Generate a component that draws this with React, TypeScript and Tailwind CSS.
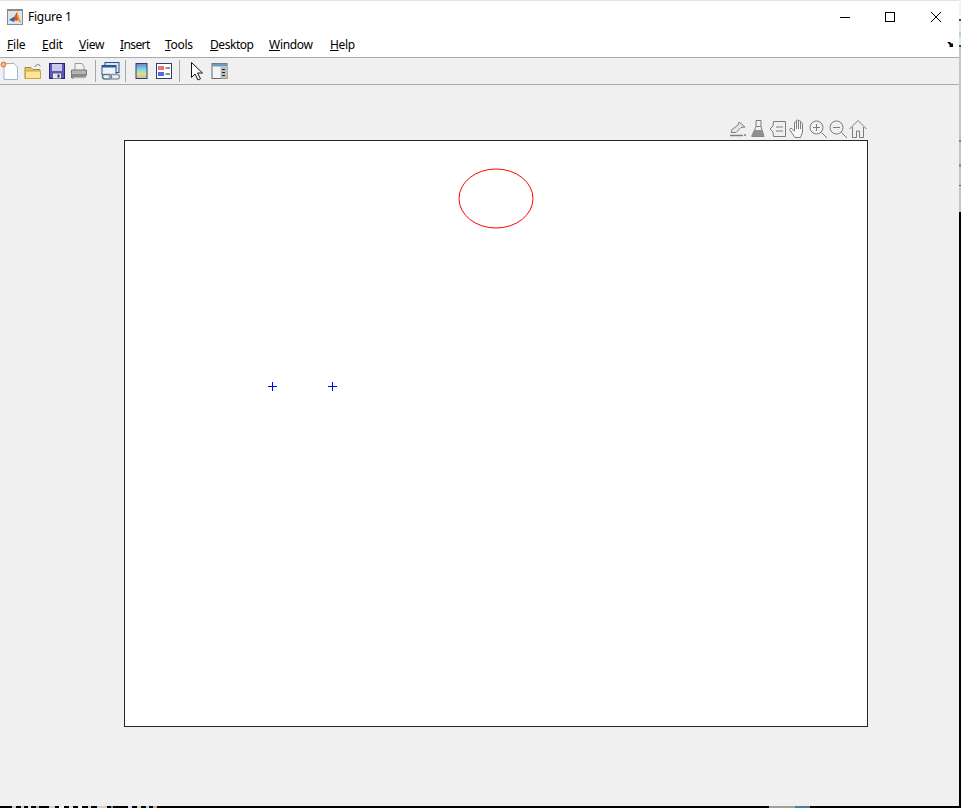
const menus: [string, string, string, string][] = [
  ["F", "ile", "w-[35px]", "tracking-[-0.2px]"],
  ["E", "dit", "w-[37px]", "tracking-[-0.2px]"],
  ["V", "iew", "w-[41px]", "tracking-[-0.3px]"],
  ["I", "nsert", "w-[45px]", "tracking-[-0.6px]"],
  ["T", "ools", "w-[45px]", "tracking-[-0.3px]"],
  ["D", "esktop", "w-[59px]", "tracking-[-0.45px]"],
  ["W", "indow", "w-[61px]", "tracking-[-0.3px]"],
  ["H", "elp", "w-[40px]", "tracking-[-0.3px]"],
];

const specks: [number, string][] = [
  [12, "bg-black"], [4, "bg-[#bcd4e8]"], [5, "bg-black"], [3, "bg-[#e8c9a0]"], [4, "bg-black"], [3, "bg-[#cfe0ef]"], [5, "bg-black"], [3, "bg-[#e0a070]"],
  [10, "bg-black"], [3, "bg-[#bcd4e8]"], [3, "bg-[#e8c9a0]"], [4, "bg-black"], [5, "bg-[#f0f0f0]"], [5, "bg-black"], [4, "bg-[#cfe0ef]"], [5, "bg-black"], [4, "bg-[#f0f0f0]"],
  [6, "bg-black"], [3, "bg-[#e8c9a0]"], [6, "bg-black"], [4, "bg-[#bcd4e8]"], [6, "bg-[#e8c9a0]"], [4, "bg-black"], [2, "bg-[#4a9ad0]"],
  [15, "bg-black"], [4, "bg-[#cfe0ef]"], [5, "bg-black"], [4, "bg-[#e8c9a0]"], [5, "bg-black"], [3, "bg-[#bcd4e8]"], [4, "bg-black"], [4, "bg-[#e0a070]"],
];

function Sep({ className = "mx-[4px]" }: { className?: string }) {
  return <div className={`w-px h-[22px] bg-[#a8a8a8] shrink-0 ${className}`} />;
}

function Tool({ children, w = "w-[23px]" }: { children: React.ReactNode; w?: string }) {
  return <svg viewBox="0 0 20 20" className={`${w} h-[20px] shrink-0`}>{children}</svg>;
}

function ToolbarIcons() {
  return (
    <div className="h-[26px] flex items-center bg-[#f0f0f0] border-b border-[#a9a9a9] box-content shrink-0">
      <Tool w="w-[20px]">
        <path d="M4 2.5h10l3.5 3.5v12.5H4z" fill="#fff" stroke="#9db4d4" />
        <circle cx="3.5" cy="3.5" r="2.4" fill="#f6b98a" stroke="#e0662c" />
      </Tool>
      <div className="w-[2px] shrink-0" />
      <Tool w="w-[22px]">
        <path d="M2 6.5h6l2 2h7v9H2z" fill="#e6c466" stroke="#a88a2c" />
        <path d="M2.5 10h15v7.5h-15z" fill="#fbe59a" stroke="#c8a53c" />
        <path d="M11.5 6l3-3 3 2" fill="none" stroke="#5f7fa6" />
      </Tool>
      <div className="w-[2px] shrink-0" />
      <Tool w="w-[22px]">
        <rect x="2.5" y="2.5" width="15" height="15" fill="#5a5ab8" stroke="#26266e" />
        <rect x="5" y="3" width="10" height="7" fill="#c9c9ea" />
        <rect x="6" y="12.5" width="8" height="5" fill="#e8e8e8" />
        <rect x="10.5" y="13.5" width="2" height="3" fill="#333" />
      </Tool>
      <Tool w="w-[22px]">
        <path d="M6 2.5h7l2 3v5H6z" fill="#f2f2f2" stroke="#9a9a9a" />
        <path d="M2.5 9h15v5l-2 3h-13z" fill="#b4b4b4" stroke="#777" />
        <path d="M3 13h14v3H3z" fill="#8a8a8a" />
        <path d="M5 16.5h11v1.5H5z" fill="#dedede" />
      </Tool>
      <Sep className="ml-[5px] mr-[4px]" />
      <Tool w="w-[21px]">
        <rect x="4.5" y="1.5" width="14" height="10" fill="#dbe6f5" stroke="#2a4f85" />
        <rect x="1.5" y="4.5" width="14" height="9" fill="#eef3fa" stroke="#2a4f85" />
        <rect x="1.5" y="4.5" width="14" height="2" fill="#2a5a9b" />
        <rect x="2" y="13.5" width="9" height="4.5" rx="2.2" fill="none" stroke="#64778c" strokeWidth="1.5" />
        <rect x="9" y="13.5" width="10" height="4.5" rx="2.2" fill="none" stroke="#8b9aaa" strokeWidth="1.5" />
      </Tool>
      <Sep />
      <Tool>
        <defs>
          <linearGradient id="cbar" x1="0" y1="0" x2="0" y2="1">
            <stop offset="0" stopColor="#6a80c8" />
            <stop offset="0.35" stopColor="#7fd0e0" />
            <stop offset="0.65" stopColor="#c8e8a0" />
            <stop offset="1" stopColor="#f4b090" />
          </linearGradient>
        </defs>
        <rect x="4.5" y="2.5" width="11" height="15" fill="url(#cbar)" stroke="#2a4170" />
      </Tool>
      <Tool w="w-[22px]">
        <rect x="2.5" y="2.5" width="15" height="15" fill="#fff" stroke="#2a4170" />
        <rect x="4" y="5" width="6" height="4" fill="#ee7070" />
        <rect x="4" y="11" width="6" height="4" fill="#5a66e0" />
        <path d="M11.5 7h4.5M11.5 13h4.5" stroke="#222" strokeWidth="1.2" />
      </Tool>
      <Sep className="ml-[4px] mr-[5px]" />
      <Tool>
        <path d="M5 1.5v15l3.5-3.5 3 6 2.5-1.2-3-5.8h5z" fill="#fff" stroke="#111" />
      </Tool>
      <Tool>
        <rect x="2.5" y="2.5" width="15" height="15" fill="#f4f4f4" stroke="#666" />
        <rect x="2.5" y="2.5" width="15" height="3" fill="#6f9cbc" />
        <rect x="11" y="5.5" width="6.5" height="12" fill="#bdbdbd" />
        <path d="M12.5 8.5h3M12.5 11.5h3M12.5 14.5h3" stroke="#222" />
      </Tool>
    </div>
  );
}

function AxesToolbar() {
  const s = "#7d7d7d";
  return (
    <div className="h-[20px] flex justify-end pr-[91px] shrink-0">
      <svg viewBox="0 0 20 20" className="w-[20px] h-[20px]">
        <path d="M3 13.5l1-3 6-4.5 1-3 6 5-4 .5-5 5z" fill="#e6e6e6" stroke={s} />
        <path d="M2 16.5h13M17 15v2" fill="none" stroke={s} strokeWidth="1.5" />
      </svg>
      <svg viewBox="0 0 20 20" className="w-[20px] h-[20px]">
        <path d="M8 1.5h5v6l3 10H4l4-10z M8 7.5h5" fill="#f0f0f0" stroke={s} />
        <path d="M6 11h8.5l1.5 6.5H3z" fill="#8f8f8f" />
      </svg>
      <svg viewBox="0 0 20 20" className="w-[20px] h-[20px]">
        <path d="M5.5 2.5h12v15h-12L5 13 2 10l3-3z M8 8h7M8 12h7" fill="none" stroke={s} />
      </svg>
      <svg viewBox="0 0 20 20" className="w-[20px] h-[20px]">
        <path d="M7 18.5l-5.5-8 1.5-1.5 3.5 3V4a1 1 0 012 0v6-8a1 1 0 012 0v8-7.5a1 1 0 012 0V10 4.5a1 1 0 012 0V13l-2 5.5z" fill="#f8f8f8" stroke={s} strokeLinejoin="round" />
      </svg>
      <svg viewBox="0 0 20 20" className="w-[20px] h-[20px]">
        <circle cx="8.5" cy="8.5" r="6.5" fill="none" stroke={s} />
        <path d="M5 8.5h7M8.5 5v7M13.5 13.5l5.5 5.5" fill="none" stroke={s} />
      </svg>
      <svg viewBox="0 0 20 20" className="w-[20px] h-[20px]">
        <circle cx="8.5" cy="8.5" r="6.5" fill="none" stroke={s} />
        <path d="M5 8.5h7M13.5 13.5l5.5 5.5" fill="none" stroke={s} />
      </svg>
      <svg viewBox="0 0 20 20" className="w-[20px] h-[20px]">
        <path d="M1.5 10l8.5-8.5 8.5 8.5M4.5 8v10.5h4v-6.5h3v6.5h4V8" fill="none" stroke={s} />
      </svg>
    </div>
  );
}

export default function App() {
  return (
    <div className="w-[961px] h-[808px] flex flex-col bg-black overflow-hidden font-['Noto_Sans',sans-serif] text-black">
      <div className="h-[806px] flex shrink-0">
        <div className="w-[959px] h-[806px] flex flex-col bg-[#f0f0f0] shrink-0">
          <div className="bg-white border-t-2 border-[#e4e4e4] box-content shrink-0 -mt-[1px]">
            <div className="h-[32px] flex items-center">
              <div className="ml-[7px] w-[16px] h-[16px] border border-[#8a8a8a] border-t-2 bg-[#dfe4ea] flex items-center justify-center">
                <svg viewBox="0 0 14 14" className="w-[14px] h-[14px]">
                  <path d="M1 9l3-2 2-1 3-5 4 11-3-3-2 1-2-2z" fill="#d9541e" />
                  <path d="M1 9l3-2 2-1 1 3-1 2z" fill="#2f6fb0" />
                  <path d="M9 1l4 11-3-3-1-4z" fill="#f4a82a" />
                </svg>
              </div>
              <span className="ml-[5px] text-[12px] leading-none tracking-[-0.25px] whitespace-nowrap">Figure 1</span>
              <div className="ml-auto flex items-center">
                <svg viewBox="0 0 45 32" className="w-[45px] h-[32px]"><path d="M11 16.5h10" stroke="#000" /></svg>
                <svg viewBox="0 0 46 32" className="w-[46px] h-[32px]"><rect x="11.5" y="11.5" width="9" height="9" fill="none" stroke="#000" /></svg>
                <svg viewBox="0 0 39 32" className="w-[39px] h-[32px]"><path d="M11 11l10 10M21 11L11 21" stroke="#000" /></svg>
              </div>
            </div>
            <div className="h-[24px] flex items-center pl-[7px] relative border-b border-[#a9a9a9] box-content">
              {menus.map(([k, rest, w, t]) => (
                <div key={k} className={`${w} ${t} shrink-0 text-[12px] leading-none whitespace-nowrap -mt-[1px]`}>
                  <span className="underline">{k}</span>
                  {rest}
                </div>
              ))}
              <svg viewBox="0 0 8 8" className="absolute right-[4px] top-[8px] w-[8px] h-[8px]">
                <path d="M0 1h3l2 2 1-1v4H2l1-1-1-2z" fill="#000" />
              </svg>
            </div>
          </div>
          <ToolbarIcons />
          <div className="flex-1 flex flex-col pt-[34px]">
            <AxesToolbar />
            <div className="ml-[124px] mt-[1px] w-[744px] h-[587px] bg-white border border-[#262626]">
              <svg viewBox="0 0 742 585" className="w-[742px] h-[585px] block">
                <ellipse cx="371" cy="57.5" rx="37" ry="29.5" fill="none" stroke="#ff0000" />
                <path d="M143 245.5h9M147.5 241v9M203 245.5h9M207.5 241v9" stroke="#0000ff" />
              </svg>
            </div>
          </div>
        </div>
        <div className="w-[2px] h-[806px] flex flex-col shrink-0">
          <div className="h-[212px] flex flex-col bg-[#c4c4c4] shrink-0">
            <div className="h-[19px] bg-[#f4f4f4]" />
            <div className="h-[2px] bg-[#1f4e79]" />
            <div className="h-[11px] bg-[#e8e8e8]" />
            <div className="h-[5px] bg-[#a8d8ee]" />
            <div className="h-[8px] bg-[#e8e8e8]" />
            <div className="h-[2px] bg-[#1f4e79]" />
            <div className="h-[93px]" />
            <div className="h-[2px] bg-[#808080]" />
            <div className="h-[22px]" />
            <div className="h-[3px] bg-[#909090]" />
            <div className="h-[18px]" />
            <div className="h-[1px] bg-[#606060]" />
          </div>
        </div>
      </div>
      <div className="h-[2px] flex shrink-0">
        {specks.map(([w, c], i) => (
          <div key={i} className={`h-[2px] shrink-0 ${c}`} style={{ width: w }} />
        ))}
        <div className="flex-1" />
        <div className="w-[26px] h-[2px] bg-[#a0a0a0] shrink-0" />
        <div className="w-[15px] h-[2px] bg-[#4d7a96] shrink-0" />
        <div className="w-[151px] shrink-0" />
      </div>
    </div>
  );
}
